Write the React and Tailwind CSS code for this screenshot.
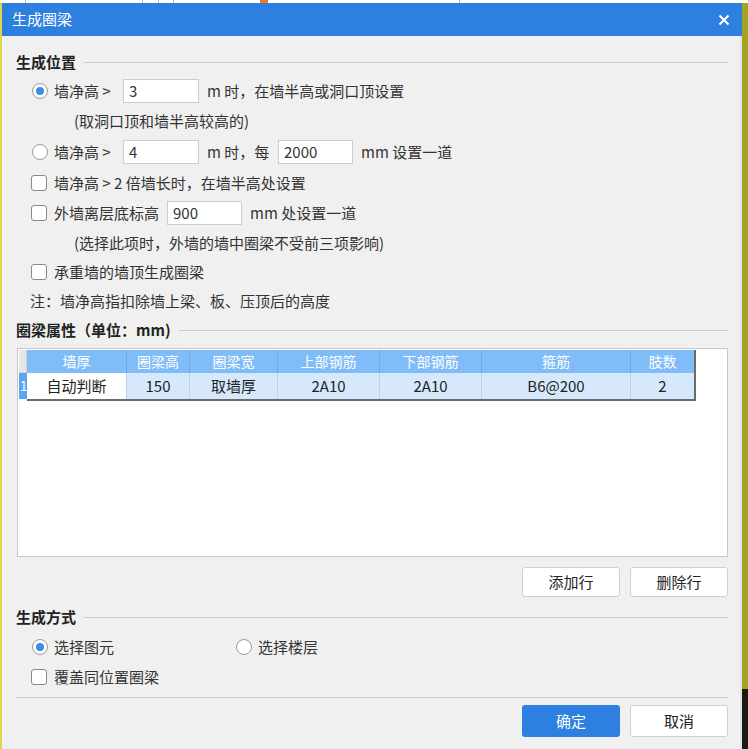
import React from "react";

const Radio = ({ checked }) => (
  <span className="w-[16px] h-[16px] rounded-full border border-[#9a9a9a] bg-white flex items-center justify-center shrink-0">
    {checked && <span className="w-[8px] h-[8px] rounded-full bg-[#3a8ee8]" />}
  </span>
);

const Check = () => (
  <span className="w-[16px] h-[16px] rounded-[3px] border border-[#8a8a8a] bg-white shrink-0" />
);

const Field = ({ value, w = "w-[76px]" }) => (
  <div className={`${w} h-[24px] bg-white border border-[#cdcdcd] flex items-center pl-[5px] text-[15px] text-[#333]`}>
    {value}
  </div>
);

const Section = ({ title, className }) => (
  <div className={`h-[20px] flex items-center gap-[8px] ${className}`}>
    <span className="text-[15px] font-bold text-[#222] whitespace-nowrap">{title}</span>
    <div className="flex-1 h-px bg-[#c9c9c9]" />
  </div>
);

const Btn = ({ children, primary }) => (
  <button
    className={`w-[98px] h-full rounded-[3px] text-[15px] ${
      primary
        ? "bg-[#2d7fe0] text-white"
        : "bg-white border border-[#d0d0d0] text-[#222]"
    }`}
  >
    {children}
  </button>
);

const cols = [
  ["墙厚", "w-[100px]", "自动判断"],
  ["圈梁高", "w-[63px]", "150"],
  ["圈梁宽", "w-[88px]", "取墙厚"],
  ["上部钢筋", "w-[102px]", "2A10"],
  ["下部钢筋", "w-[102px]", "2A10"],
  ["箍筋", "w-[149px]", "B6@200"],
  ["肢数", "w-[63px]", "2"],
];

export default function App() {
  return (
    <div className="w-[748px] h-[749px] flex flex-col overflow-hidden bg-white font-['Noto_Sans_CJK_SC','Noto_Sans',sans-serif]">
      {/* bit of the app behind the dialog */}
      <div className="h-[3px] flex bg-white">
        <div className="w-[26px] border-r border-[#bbb]" />
        <div className="w-[117px] border-r border-[#bbb]" />
        <div className="w-[16px] border-r border-[#bbb]" />
        <div className="w-[15px] border-r border-[#bbb]" />
        <div className="w-[86px]" />
        <div className="w-[8px] bg-[#f07a20]" />
        <div className="w-[192px] border-r border-[#bbb]" />
      </div>

      <div className="flex-1 flex">
        <div className="w-[2px] bg-[#dcd84a]" />

        <div className="w-[740px] flex flex-col">
          <div className="h-[33px] bg-[#2d7fe0] flex items-center justify-between pl-[10px] pr-[12px]">
            <span className="text-white text-[15px]">生成圈梁</span>
            <svg width="12" height="12" viewBox="0 0 12 12">
              <path d="M1.5 1.5L10.5 10.5M10.5 1.5L1.5 10.5" stroke="white" strokeWidth="2" />
            </svg>
          </div>

          <div className="flex-1 bg-[#f0f0f0] border-r-2 border-[#e4e4e4] pl-[14px] pr-[12px] text-[15px] text-[#333] flex flex-col">
            <Section title="生成位置" className="mt-[16px]" />

            <div className="mt-[7px] h-[24px] flex items-center pl-[16px]">
              <Radio checked />
              <span className="ml-[6px] w-[69px]">墙净高 &gt;</span>
              <Field value="3" />
              <span className="ml-[8px]">m 时，在墙半高或洞口顶设置</span>
            </div>

            <div className="mt-[8px] h-[20px] flex items-center pl-[58px]">(取洞口顶和墙半高较高的)</div>

            <div className="mt-[9px] h-[24px] flex items-center pl-[16px]">
              <Radio />
              <span className="ml-[6px] w-[69px]">墙净高 &gt;</span>
              <Field value="4" />
              <span className="ml-[8px] w-[71px]">m 时，每</span>
              <Field value="2000" w="w-[75px]" />
              <span className="ml-[8px]">mm 设置一道</span>
            </div>

            <div className="mt-[7px] h-[24px] flex items-center pl-[15px]">
              <Check />
              <span className="ml-[7px]">墙净高 &gt; 2 倍墙长时，在墙半高处设置</span>
            </div>

            <div className="mt-[6px] h-[24px] flex items-center pl-[15px]">
              <Check />
              <span className="ml-[7px] w-[113px]">外墙离层底标高</span>
              <Field value="900" w="w-[75px]" />
              <span className="ml-[8px]">mm 处设置一道</span>
            </div>

            <div className="mt-[8px] h-[20px] flex items-center pl-[58px]">(选择此项时，外墙的墙中圈梁不受前三项影响)</div>

            <div className="mt-[7px] h-[24px] flex items-center pl-[15px]">
              <Check />
              <span className="ml-[7px]">承重墙的墙顶生成圈梁</span>
            </div>

            <div className="mt-[7px] h-[20px] flex items-center pl-[14px]">注：墙净高指扣除墙上梁、板、压顶后的高度</div>

            <Section title="圈梁属性（单位：mm)" className="mt-[9px]" />

            <div className="mt-[8px] ml-[1px] h-[209px] bg-white border border-[#c8c8c8] p-px">
              <div className="flex">
                <div className="w-[8px] flex flex-col">
                  <div className="h-[23px] bg-[#e6e6e6] border-r border-b border-[#cfcfcf]" />
                  <div className="h-[26px] bg-[#5aa6f0] text-white text-[13px] leading-[26px] pl-px">1</div>
                </div>
                <div className="flex flex-col border-r-2 border-b-2 border-[#6b6b6b]">
                  <div className="flex h-[23px] bg-[#80bcf7] text-[14px]">
                    {cols.map(([h, w]) => (
                      <div key={h} className={`${w} border-r border-[#6aaaf0] last:border-r-0 text-white flex items-center justify-center`}>
                        {h}
                      </div>
                    ))}
                  </div>
                  <div className="flex h-[26px] bg-[#d6e9fc] text-[15px]">
                    {cols.map(([h, w, v], i) => (
                      <div
                        key={h}
                        className={`${w} border-r border-[#bfd3e8] last:border-r-0 text-[#222] flex items-center justify-center ${
                          i === 0 ? "bg-white" : ""
                        }`}
                      >
                        {v}
                      </div>
                    ))}
                  </div>
                </div>
              </div>
            </div>

            <div className="mt-[10px] h-[30px] flex justify-end gap-[10px]">
              <Btn>添加行</Btn>
              <Btn>删除行</Btn>
            </div>

            <Section title="生成方式" className="mt-[10px]" />

            <div className="mt-[8px] h-[24px] flex items-center pl-[16px]">
              <Radio checked />
              <span className="ml-[6px] w-[182px]">选择图元</span>
              <Radio />
              <span className="ml-[6px]">选择楼层</span>
            </div>

            <div className="mt-[6px] h-[24px] flex items-center pl-[15px]">
              <Check />
              <span className="ml-[7px]">覆盖同位置圈梁</span>
            </div>

            <div className="mt-[8px] h-px bg-[#c9c9c9]" />

            <div className="mt-[7px] h-[32px] flex justify-end gap-[10px]">
              <Btn primary>确定</Btn>
              <Btn>取消</Btn>
            </div>
          </div>
        </div>

        <div className="flex-1 flex flex-col">
          <div className="flex-1 bg-[#a3a328]" />
          <div className="h-[60px] bg-[#1a1a10]" />
        </div>
      </div>
    </div>
  );
}
